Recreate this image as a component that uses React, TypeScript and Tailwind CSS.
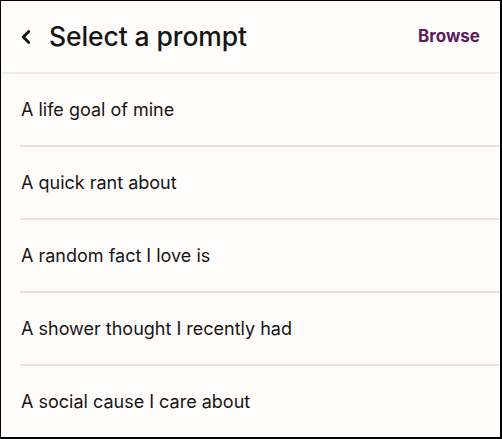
import { ChevronLeft } from 'lucide-react';

const prompts = [
  'A life goal of mine',
  'A quick rant about',
  'A random fact I love is',
  'A shower thought I recently had',
  'A social cause I care about',
];

export default function App() {
  return (
    <div
      className="w-[502px] h-[439px] overflow-hidden bg-[#fdfcfb] border-l border-t border-r-2 border-b-2 border-black text-[#151515]"
      style={{ fontFamily: 'Inter, "Noto Sans", sans-serif' }}
    >
      {/* Header */}
      <div className="h-[73px] flex items-center justify-between pl-[14px] pr-[20px] border-b-2 border-[#ececea]">
        <div className="flex items-center">
          <ChevronLeft className="w-[22px] h-[22px]" strokeWidth={3} />
          <h1 className="ml-[12px] text-[26.5px] font-medium tracking-[-0.1px]">Select a prompt</h1>
        </div>
        <button className="text-[17px] font-bold text-[#5a1d58]">Browse</button>
      </div>

      {/* Prompt list */}
      <div>
        {prompts.map((p) => (
          <div key={p} className="pl-[19px]">
            <div className="h-[71px] flex items-center text-[18px] pl-[1px]">{p}</div>
            <div className="h-[2px] bg-[#e3e3e3]" />
          </div>
        ))}
      </div>
    </div>
  );
}
